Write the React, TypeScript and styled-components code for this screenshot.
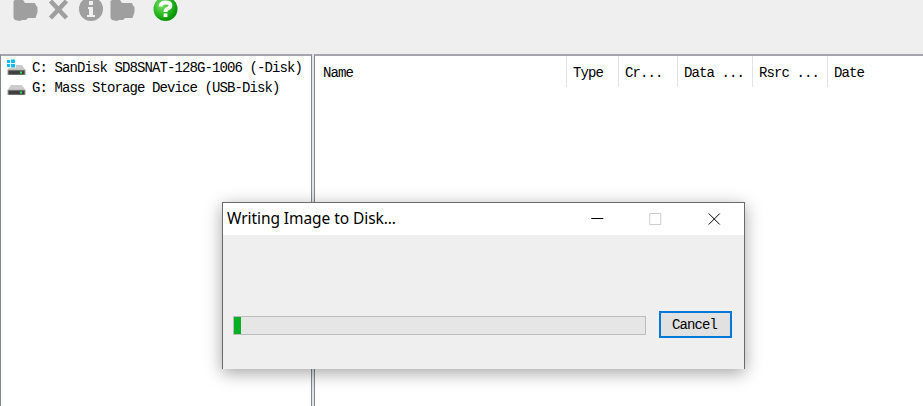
import React from "react";
import styled, { createGlobalStyle } from "styled-components";

const Global = createGlobalStyle`
  * { box-sizing: border-box; }
  html, body { margin: 0; padding: 0; overflow: hidden; }
`;

const mono = `"Liberation Mono", "DejaVu Sans Mono", monospace`;

const Window = styled.div`
  position: relative;
  display: flex;
  flex-direction: column;
  width: 923px;
  height: 406px;
  overflow: hidden;
  background: #efefef;
  color: #000;
  font: 14px/20px ${mono};
  letter-spacing: -0.9px;
  white-space: pre;
`;

const Toolbar = styled.div`
  display: flex;
  flex: none;
  height: 54px;
  padding-left: 13px;
`;

const ToolIcon = styled.svg<{ $gap: number }>`
  display: block;
  flex: none;
  width: 25px;
  height: 22px;
  margin-right: ${(p) => p.$gap}px;
`;

const Panels = styled.div`
  display: grid;
  grid-template-columns: 312px 1fr;
  column-gap: 2px;
  flex: 1;
  background: #e2e4e8;
`;

const Pane = styled.div<{ $open?: boolean }>`
  border: 1px solid #82878f;
  border-top: 2px solid #a5a5ae;
  border-right-width: ${(p) => (p.$open ? 0 : 1)}px;
  border-bottom: 0;
  background: #fff;
`;

const DriveRow = styled.div`
  display: flex;
  align-items: center;
  height: 20px;
  padding-left: 6px;
  &:first-child { margin-top: 2px; }
`;

const DriveIcon = styled.svg`
  flex: none;
  width: 20px;
  height: 20px;
  margin-right: 5px;
`;

const Header = styled.div`
  display: grid;
  grid-template-columns: 252px 52px 59px 75px 75px 1fr;
  height: 31px;
`;

const HeaderCell = styled.div`
  padding: 7px 0 0 6px;
  border-right: 1px solid #e3e3e3;
  &:first-child { padding-left: 8px; }
  &:last-child { border-right: 0; }
`;

const Dialog = styled.div`
  position: absolute;
  left: 222px;
  top: 202px;
  display: flex;
  flex-direction: column;
  width: 523px;
  height: 167px;
  border: 1px solid #6b6b6b;
  border-bottom: 0;
  background: #efefef;
  box-shadow: 0 4px 16px rgba(0, 0, 0, 0.36);
`;

const TitleBar = styled.div`
  display: flex;
  flex: none;
  align-items: center;
  height: 32px;
  padding: 0 7px 0 4px;
  background: #fff;
`;

const Title = styled.span`
  flex: 1;
  font: 15.5px/30px "Noto Sans", "Open Sans", sans-serif;
  letter-spacing: -0.07px;
  padding-bottom: 2px;
`;

const Caption = styled.svg`
  width: 58.5px;
  height: 32px;
`;

const DialogBody = styled.div`
  display: flex;
  align-items: flex-start;
  gap: 13px;
  padding: 76px 12px 0 10px;
`;

const Progress = styled.div`
  width: 413px;
  height: 19px;
  margin-top: 5px;
  border: 1px solid #bcbcbc;
  background: #e6e6e6;
`;

const ProgressFill = styled.div`
  width: 7px;
  height: 17px;
  background: #06b025;
`;

const Button = styled.button`
  width: 73px;
  height: 27px;
  padding: 0 2px 0 0;
  border: 2px solid #0078d7;
  background: #e1e1e1;
  color: #000;
  font: inherit;
  letter-spacing: inherit;
`;

const Folder = ({ gap }: { gap: number }) => (
  <ToolIcon $gap={gap} viewBox="0 0 25 22">
    <path d="M0.5 1L2 0H10L12 3H22L23 5.5L24.5 7V12L22.5 18H15L13 20H9L7 21L2 20L0.5 18Z" fill="#9f9f9f" />
  </ToolIcon>
);

const Drive = ({ system }: { system?: boolean }) => (
  <DriveIcon viewBox="0 0 20 20">
    <path d="M4 7H15L18 11.5H1Z" fill="#cbcbcb" />
    <path d="M0.5 11.5H18.5V17H0.5Z" fill="#9a9a9a" />
    <path d="M1.5 12.5H17.5V16.5H1.5Z" fill="#414141" />
    <path d="M13 13.5h2v2h-2z" fill="#26ee45" />
    {system && (
      <>
        <path d="M-1 0H9V10H0Z" fill="#fff" />
        <path d="M0 2h3v3H0zM4 1.5h4v3.5H4zM0 6h3v3H0zM4 6h4v3.5H4z" fill="#10bdf2" />
      </>
    )}
  </DriveIcon>
);

export default function App() {
  return (
    <>
      <Global />
      <Window>
        <Toolbar>
          <Folder gap={10} />
          <ToolIcon $gap={6} viewBox="0 0 25 22">
            <path d="M2.5 1L18.5 18M18.5 1L2.5 18" stroke="#9f9f9f" strokeWidth="4.5" />
          </ToolIcon>
          <ToolIcon $gap={6} viewBox="0 0 25 22">
            <circle cx="12" cy="9" r="12" fill="#9f9f9f" />
            <path d="M10 1h4v4h-4zM9 7h5v8h2v2H8v-2h2V9H9z" fill="#efefef" />
          </ToolIcon>
          <Folder gap={18} />
          <ToolIcon $gap={0} viewBox="0 0 25 22">
            <defs>
              <radialGradient id="help" cx="0.35" cy="0.35" r="0.65">
                <stop offset="0" stopColor="#7ce06a" />
                <stop offset="0.55" stopColor="#2fbd26" />
                <stop offset="1" stopColor="#079508" />
              </radialGradient>
            </defs>
            <circle cx="12.5" cy="9" r="12" fill="url(#help)" />
            <path d="M7.5 6.5Q7.5 2.5 12.5 2.5Q17.5 2.5 17.5 5.5Q17.5 7.5 14.5 8.7Q12.5 9.5 12.5 12M12.5 13.5v3.5" fill="none" stroke="#fff" strokeWidth="3.8" />
          </ToolIcon>
        </Toolbar>
        <Panels>
          <Pane>
            <DriveRow><Drive system />C: SanDisk SD8SNAT-128G-1006 (-Disk)</DriveRow>
            <DriveRow><Drive />G: Mass Storage Device (USB-Disk)</DriveRow>
          </Pane>
          <Pane $open>
            <Header>
              {["Name", "Type", "Cr...", "Data ...", "Rsrc ...", "Date"].map((label) => (
                <HeaderCell key={label}>{label}</HeaderCell>
              ))}
            </Header>
          </Pane>
        </Panels>
        <Dialog>
          <TitleBar>
            <Title>Writing Image to Disk...</Title>
            <Caption viewBox="0 0 58 32"><path d="M29 15.5h12" stroke="#000" /></Caption>
            <Caption viewBox="0 0 58 32"><path d="M29.5 10.5h11v11h-11z" fill="none" stroke="#ccc" /></Caption>
            <Caption viewBox="0 0 58 32"><path d="M29.5 10.5l11 11m0-11l-11 11" stroke="#000" /></Caption>
          </TitleBar>
          <DialogBody>
            <Progress><ProgressFill /></Progress>
            <Button>Cancel</Button>
          </DialogBody>
        </Dialog>
      </Window>
    </>
  );
}
